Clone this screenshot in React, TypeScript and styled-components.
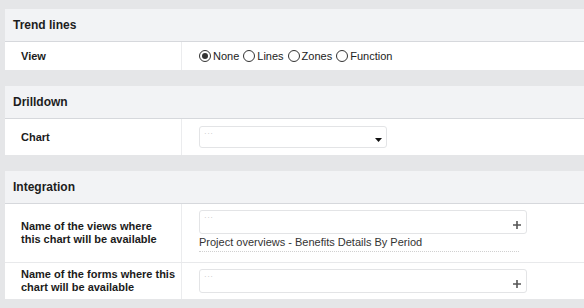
import styled, { createGlobalStyle } from "styled-components";

const GlobalStyle = createGlobalStyle`
    html, body {
        margin: 0;
        padding: 0;
        background: #e5e6e8;
        font-family: "Liberation Sans", Arial, sans-serif;
        color: #1b1b1b;
    }
`;

const Page = styled.div`
    width: 584px;
    height: 308px;
    padding: 9px 0 0 5px;
    box-sizing: border-box;
    display: flex;
    flex-direction: column;
    gap: 16px;
    overflow: hidden;
`;

const Panel = styled.section`
    background: #fff;
    display: flex;
    flex-direction: column;
`;

const PanelHeader = styled.div`
    height: 32px;
    padding-left: 8px;
    display: flex;
    align-items: center;
    background: #f2f3f5;
    border-bottom: 1px solid #d6d8dc;
    font-size: 12px;
    font-weight: bold;
    color: #1d1d1d;
`;

const Row = styled.div<{ $height: number }>`
    display: flex;
    min-height: ${(p) => p.$height}px;

    & + & {
        border-top: 1px solid #e8e9eb;
    }
`;

const Label = styled.div`
    width: 160px;
    flex: none;
    padding-left: 16px;
    display: flex;
    align-items: center;
    border-right: 1px solid #ebecee;
    font-size: 11px;
    font-weight: bold;
    line-height: 13px;
`;

const Value = styled.div<{ $top?: boolean }>`
    flex: 1;
    padding: ${(p) => (p.$top ? "6px" : "0")} 0 0 17px;
    display: flex;
    flex-direction: column;
    justify-content: ${(p) => (p.$top ? "flex-start" : "center")};
`;

const RadioGroup = styled.div`
    display: flex;
    align-items: center;
    gap: 4px;
    font-size: 11px;
`;

const RadioOption = styled.label`
    display: flex;
    align-items: center;
    gap: 2px;
    color: #222;
`;

const RadioCircle = styled.span<{ $checked?: boolean }>`
    width: 12px;
    height: 12px;
    box-sizing: border-box;
    border: 1px solid #333;
    border-radius: 50%;
    display: flex;
    align-items: center;
    justify-content: center;
    background: #fff;

    &::after {
        content: "";
        display: ${(p) => (p.$checked ? "block" : "none")};
        width: 6px;
        height: 6px;
        border-radius: 50%;
        background: #333;
    }
`;

const Field = styled.div<{ $width: number; $height: number }>`
    width: ${(p) => p.$width}px;
    height: ${(p) => p.$height}px;
    box-sizing: border-box;
    border: 1px solid #e3e4e6;
    border-radius: 3px;
    background: #fff;
    position: relative;
`;

const Placeholder = styled.span`
    position: absolute;
    left: 4px;
    top: 2px;
    font-size: 8px;
    letter-spacing: 0.5px;
    color: #c2c2c2;
`;

const FieldIcon = styled.span<{ $top: number; $right: number }>`
    position: absolute;
    right: ${(p) => p.$right}px;
    top: ${(p) => p.$top}px;
    transform: translateY(-50%);
    display: flex;
`;

const Selected = styled.div`
    width: 320px;
    margin: 2px 0 10px;
    padding-bottom: 3px;
    border-bottom: 1px dotted #d0d0d0;
    font-size: 11px;
    line-height: 12px;
    color: #333;
`;

const Caret = () => (
    <svg width="7" height="4" viewBox="0 0 7 4">
        <path d="M0 0h7L3.5 4z" fill="#111" />
    </svg>
);

const Plus = () => (
    <svg width="8" height="8" viewBox="0 0 8 8">
        <path d="M4 0v8M0 4h8" stroke="#555" strokeWidth="1.6" />
    </svg>
);

const App = () => {
    const views = ["None", "Lines", "Zones", "Function"];

    return (
        <>
            <GlobalStyle />
            <Page>
                <Panel>
                    <PanelHeader>Trend lines</PanelHeader>
                    <Row $height={28}>
                        <Label>View</Label>
                        <Value>
                            <RadioGroup>
                                {views.map((v, i) => (
                                    <RadioOption key={v}>
                                        <RadioCircle $checked={i === 0} />
                                        {v}
                                    </RadioOption>
                                ))}
                            </RadioGroup>
                        </Value>
                    </Row>
                </Panel>

                <Panel>
                    <PanelHeader>Drilldown</PanelHeader>
                    <Row $height={36}>
                        <Label>Chart</Label>
                        <Value>
                            <Field $width={188} $height={22}>
                                <Placeholder>···</Placeholder>
                                <FieldIcon $right={4} $top={13}>
                                    <Caret />
                                </FieldIcon>
                            </Field>
                        </Value>
                    </Row>
                </Panel>

                <Panel>
                    <PanelHeader>Integration</PanelHeader>
                    <Row $height={56}>
                        <Label>
                            Name of the views where
                            <br />
                            this chart will be available
                        </Label>
                        <Value $top>
                            <Field $width={328} $height={24}>
                                <Placeholder>···</Placeholder>
                                <FieldIcon $right={5} $top={14}>
                                    <Plus />
                                </FieldIcon>
                            </Field>
                            <Selected>Project overviews - Benefits Details By Period</Selected>
                        </Value>
                    </Row>
                    <Row $height={36}>
                        <Label>
                            Name of the forms where this
                            <br />
                            chart will be available
                        </Label>
                        <Value>
                            <Field $width={328} $height={24}>
                                <Placeholder>···</Placeholder>
                                <FieldIcon $right={5} $top={14}>
                                    <Plus />
                                </FieldIcon>
                            </Field>
                        </Value>
                    </Row>
                </Panel>
            </Page>
        </>
    );
};

export default App;
